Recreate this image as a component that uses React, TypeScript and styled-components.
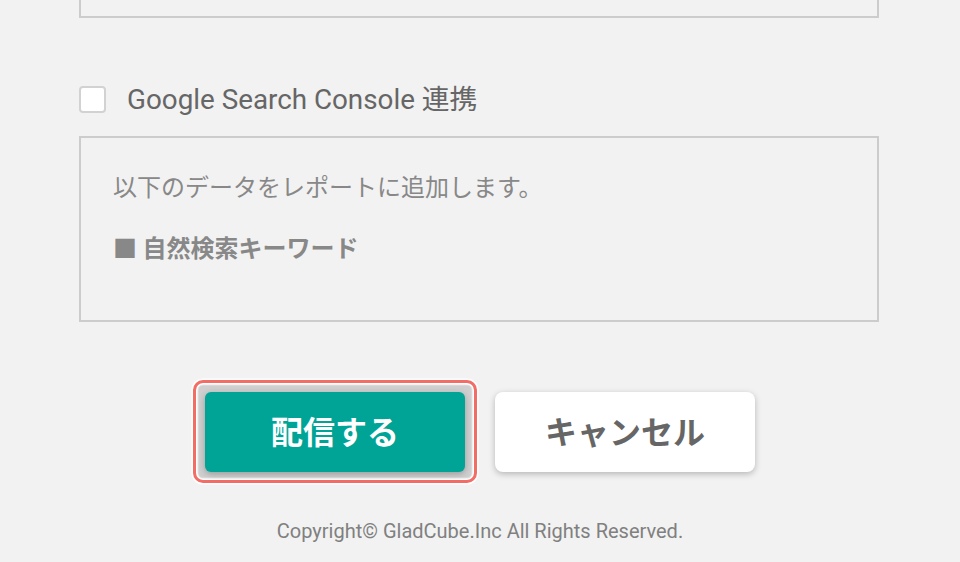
import React from "react";
import styled, { createGlobalStyle } from "styled-components";

const GlobalStyle = createGlobalStyle`
  html, body {
    margin: 0;
    padding: 0;
    background: #f2f2f2;
  }
  body {
    font-family: Roboto, "Noto Sans CJK JP", sans-serif;
    -webkit-font-smoothing: antialiased;
  }
`;

const Page = styled.div`
  width: 960px;
  height: 562px;
  overflow: hidden;
  display: flex;
  flex-direction: column;
  align-items: center;
  background: #f2f2f2;
`;

const Column = styled.div`
  width: 800px;
  margin-right: 2px;
  display: flex;
  flex-direction: column;
`;

const Panel = styled.div<{ $cut?: boolean }>`
  box-sizing: border-box;
  width: 800px;
  border: 2px solid #cccccc;
  ${(p) => (p.$cut ? "border-top: none; height: 18px;" : "")}
  background: #f2f2f2;
`;

const InfoPanel = styled(Panel)`
  height: 186px;
  padding: 30px 32px 0;
  margin-top: 23px;
  display: flex;
  flex-direction: column;
  gap: 25px;
  color: #888888;
  font-family: "Noto Sans CJK JP", sans-serif;
  font-size: 24px;
  line-height: 36px;
`;

const Line = styled.div<{ $bold?: boolean }>`
  font-weight: ${(p) => (p.$bold ? 700 : 400)};
  white-space: nowrap;
`;

const CheckRow = styled.label`
  margin-top: 68px;
  display: flex;
  align-items: center;
  gap: 21px;
  height: 27px;
  color: #666666;
  font-size: 27.8px;
  line-height: 27px;
  cursor: pointer;
`;

const Box = styled.span`
  box-sizing: border-box;
  width: 27px;
  height: 27px;
  flex: none;
  border: 2px solid #d2d2d2;
  border-radius: 4px;
  background: #ffffff;
`;

const Buttons = styled.div`
  margin-top: 70px;
  display: flex;
  gap: 30px;
  justify-content: center;
`;

const FocusWrap = styled.span`
  position: relative;
  display: inline-flex;
  &::before {
    content: "";
    position: absolute;
    top: -12px;
    left: -12px;
    right: -12px;
    bottom: -11px;
    border: 3.5px solid #f26d65;
    border-radius: 10px;
    background: #cfcfcf;
    box-shadow: 0 0 0 1.5px #ffffff, inset 0 0 0 1.5px #ffffff,
      inset 0 0 0 2.5px #e2e2e2;
  }
`;

const Button = styled.button<{ $primary?: boolean }>`
  position: relative;
  z-index: 1;
  box-sizing: border-box;
  width: 260px;
  height: 80px;
  border: none;
  border-radius: ${(p) => (p.$primary ? "6px" : "8px")};
  background: ${(p) => (p.$primary ? "#00a497" : "#ffffff")};
  color: ${(p) => (p.$primary ? "#ffffff" : "#666666")};
  font-family: "Noto Sans CJK JP", sans-serif;
  font-size: 32px;
  font-weight: 700;
  box-shadow: 0 2px 6px rgba(0, 0, 0, 0.25);
  cursor: pointer;
  padding: 0 0 5px;
`;

const Copyright = styled.div`
  margin-top: 47px;
  font-family: Roboto, sans-serif;
  font-size: 20px;
  line-height: 24px;
  color: #808080;
`;

export default function App() {
  return (
    <>
      <GlobalStyle />
      <Page>
        <Column>
          <Panel $cut />
          <CheckRow>
            <Box />
            <span>Google Search Console 連携</span>
          </CheckRow>
          <InfoPanel>
            <Line>以下のデータをレポートに追加します。</Line>
            <Line $bold>■ 自然検索キーワード</Line>
          </InfoPanel>
        </Column>
        <Buttons>
          <FocusWrap>
            <Button $primary>配信する</Button>
          </FocusWrap>
          <Button>キャンセル</Button>
        </Buttons>
        <Copyright>Copyright© GladCube.Inc All Rights Reserved.</Copyright>
      </Page>
    </>
  );
}
